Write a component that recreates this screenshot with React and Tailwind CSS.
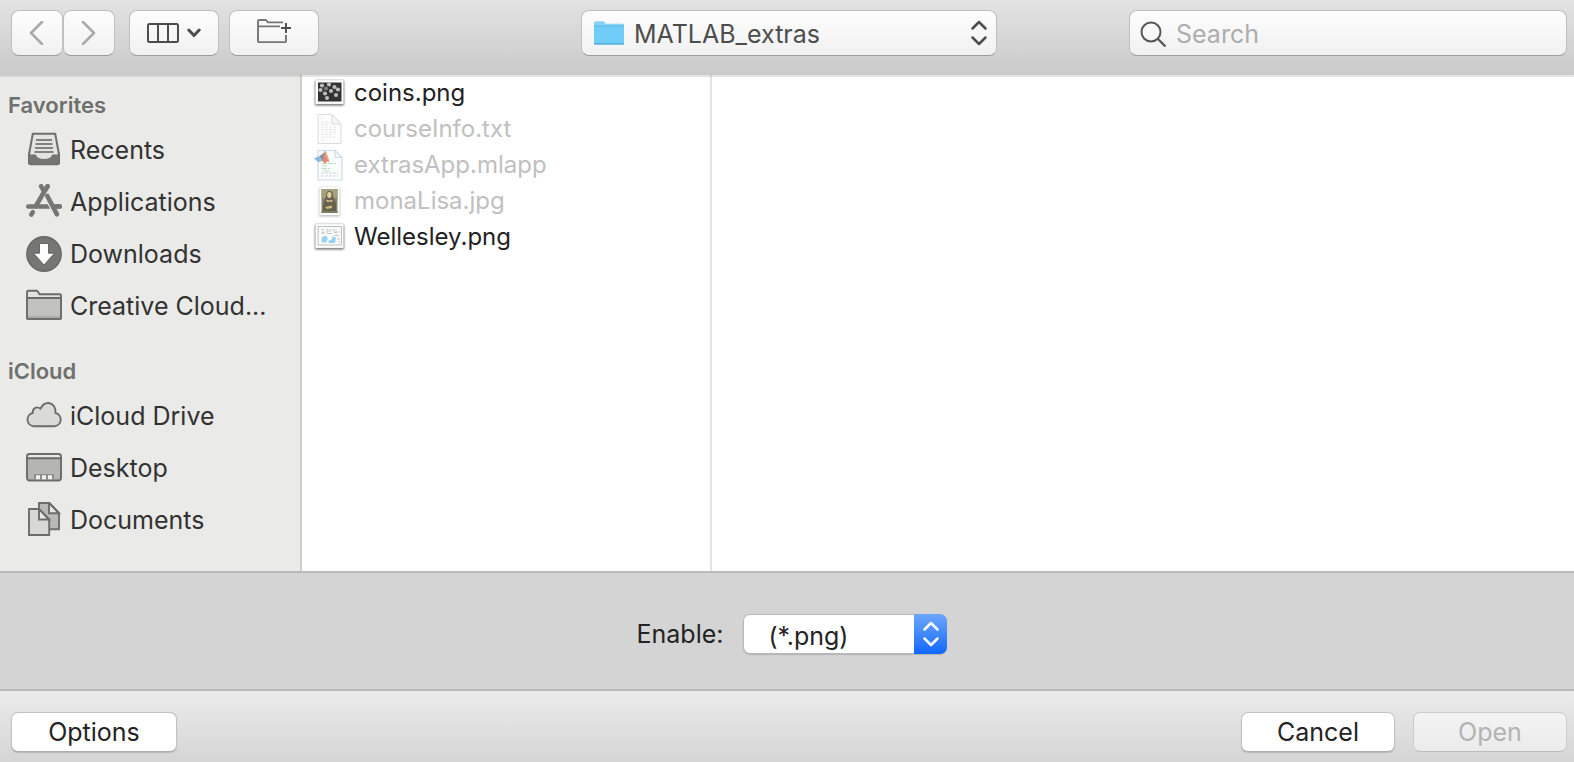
import React from "react";

const ICON = "h-9 w-9 shrink-0";

function RecentsIcon() {
  return (
    <svg className={ICON} viewBox="0 0 36 36" fill="none" aria-hidden="true">
      <path d="M6.8 1.8h22.4L33 22.5v8q0 1.7-1.7 1.7H4.7Q3 32.200 3 30.500v-8z" fill="#e4e4e2" stroke="#6f6f6d" strokeWidth="2" strokeLinejoin="round" />
      <path d="M3 23h6.500q1.500 4.500 8.500 4.500t8.500-4.500H33v7.500q0 1.700-1.700 1.700H4.700Q3 32.200 3 30.500z" fill="#767674" stroke="#6f6f6d" strokeWidth="1" />
      <path d="M10 8h16M9.500 12h17M9 16h18M8.500 20h19" stroke="#82827f" strokeWidth="1.900" />
    </svg>
  );
}

function ApplicationsIcon() {
  return (
    <svg className={ICON} viewBox="0 0 36 36" fill="none" stroke="#767674" strokeLinecap="round" aria-hidden="true">
      <path d="M2.300 22.500h31.400" strokeWidth="4.600" />
      <path d="M21.500 2.300 9.800 22" strokeWidth="4.600" />
      <path d="M6.800 28.200 5.300 30.500" strokeWidth="4.600" />
      <path d="M15.200 2.300l2.300 4" strokeWidth="4.600" />
      <path d="M18.800 8.500 31.500 31" stroke="#eaeae8" strokeWidth="6.600" strokeLinecap="butt" />
      <path d="M21.500 2.300 16.500 10.800" strokeWidth="4.600" />
      <path d="M21.300 12 31 30.300" strokeWidth="4.600" />
      <path d="M28 22.500h5.700" strokeWidth="4.600" />
    </svg>
  );
}

function DownloadsIcon() {
  return (
    <svg className={ICON} viewBox="0 0 36 36" aria-hidden="true">
      <circle cx="18" cy="18" r="17" fill="#767674" stroke="#6b6b69" strokeWidth="1.800" />
      <path d="M13.500 7.500h9v9.700h6L18 29 7.500 17.200h6z" fill="#fdfdfd" stroke="#666664" strokeWidth="1" />
    </svg>
  );
}

function FolderIcon() {
  return (
    <svg className={ICON} viewBox="0 0 36 36" strokeLinejoin="round" aria-hidden="true">
      <path d="M1 30V4q0-1.200 1.200-1.200h8.300q.8 0 1.300.7l1.400 2.300q.4.500 1 .5h19.600q1.200 0 1.200 1.200V30q0 .8-.8.8H1.800Q1 30.800 1 30z" fill="#e2e2e0" stroke="#6c6c6a" strokeWidth="1.900" />
      <path d="M1 11q0-1 1-1h32q1 0 1 1v19q0 .8-.8.8H1.800Q1 30.800 1 30z" fill="#c2c2c1" stroke="#6c6c6a" strokeWidth="1.900" />
      <path d="M2 28.700h32" stroke="#adadac" strokeWidth="2" />
    </svg>
  );
}

function CloudIcon() {
  return (
    <svg className={ICON} viewBox="0 0 36 36" aria-hidden="true">
      <path d="M7.500 28.200A6.700 6.700 0 0 1 6.700 15C6.300 10.500 10.500 7.600 14.500 10.700 16.500 6.500 19.500 4.800 22.500 5 27 5.300 30 9.500 29.500 15A6.700 6.700 0 0 1 28.700 28.200z" fill="#dadad9" stroke="#6c6c6a" strokeWidth="1.900" strokeLinejoin="round" />
    </svg>
  );
}

function DesktopIcon() {
  return (
    <svg className={ICON} viewBox="0 0 36 36" aria-hidden="true">
      <rect x="1" y="4" width="34" height="26.500" rx="2.500" fill="#b5b5b4" />
      <path d="M1 8.500V6.500Q1 4 3.500 4h29Q35 4 35 6.500v2z" fill="#e8e8e6" />
      <path d="M1 8.300h34" stroke="#6c6c6a" strokeWidth="1.900" />
      <rect x="1" y="4" width="34" height="26.500" rx="2.500" fill="none" stroke="#6c6c6a" strokeWidth="1.900" />
      <path d="M8 24h20v5.600H8z" fill="#8e8e8d" />
      <path d="M10 25.300h4v4h-4zM16 25.300h4v4h-4zM22 25.300h4v4h-4z" fill="#f2f2f1" />
    </svg>
  );
}

function DocumentsIcon() {
  return (
    <svg className={ICON} viewBox="0 0 36 36" stroke="#6c6c6a" strokeWidth="1.900" aria-hidden="true">
      <path d="M13 1h10.500L33 11v16.300H13z" fill="#b9b9b8" />
      <path d="M23 1v10.300h10z" fill="#e8e8e6" />
      <path d="M3 7h10l10.200 10.500V33H3z" fill="#d8d8d7" />
      <path d="M13 7v10.500h10z" fill="#e8e8e6" />
    </svg>
  );
}

const FILE_ICON = "h-[34px] w-[34px] shrink-0";

function Frame({ x, y, w, h, children }) {
  return (
    <svg className={FILE_ICON + " overflow-visible drop-shadow-[0_1px_1px_rgba(0,0,0,0.7)]"} viewBox="0 0 34 34" aria-hidden="true">
      <rect x={x} y={y} width={w} height={h} rx="0.500" fill="#fff" stroke="#d0d0d0" strokeWidth="0.500" />
      {children}
    </svg>
  );
}

function CoinsIcon() {
  const coins = [[8, 9], [15, 8], [20.500, 10.500], [6.500, 13.500], [12, 12], [17, 14.500], [24, 13], [11, 17], [22, 18.500], [13, 21.500]];
  return (
    <Frame x="1.500" y="4" w="28" h="24">
      <g transform="translate(0 0.500)">
        <rect x="4" y="6" width="23.500" height="19" fill="#333" />
        {coins.map(([cx, cy], i) => (
          <circle key={i} cx={cx} cy={cy} r="2.100" fill={i === 4 ? "#7d7d7d" : "#bdbdbd"} />
        ))}
      </g>
    </Frame>
  );
}

function TextFileIcon() {
  return (
    <svg className={FILE_ICON} viewBox="0 0 34 34" aria-hidden="true">
      <path d="M4 2.500h14L27 12v19.500H4z" fill="#fdfdfd" stroke="#dcdcdc" />
      <path d="M18 2.500V12h9z" fill="#f6f6f6" stroke="#dcdcdc" />
      <path d="M7 6h4M7 10h9M7 12.500h9M7 15h16M7 17.500h15M7 20h16M7 22.500h12M7 25h14M7 28h5" stroke="#e3e3e3" strokeWidth="0.900" strokeDasharray="3 1" />
    </svg>
  );
}

function AppFileIcon() {
  return (
    <svg className={FILE_ICON} viewBox="0 0 34 34" aria-hidden="true">
      <path d="M4 2.500h17L28 9.500v22.500H4z" fill="#fbfcfe" stroke="#ccd9e8" strokeWidth="1.200" />
      <path d="M21 2.500v7h7z" fill="#f1f5fa" stroke="#ccd9e8" />
      <path d="M8 15.500h14M8 18h5M8 20.500h8M10 23h5" stroke="#b9e3b9" strokeWidth="1.200" strokeDasharray="5 1" />
      <path d="M7 25h17M7 28h17" stroke="#d3d3d3" strokeWidth="1.200" strokeDasharray="3 1" />
      <path d="M0 10.500 5.500 8 8.500 13 4 14z" fill="#8db9df" />
      <path d="M5.500 8Q8.500 7 11 3L8.500 13z" fill="#7a8fa8" />
      <path d="M11 3c1.500 0 3 7 4.500 11-2-1-3-1-4.500 2Q10 14 8 13z" fill="#df8871" />
      <path d="M11 3c1.500 0 3 7 4.500 11L12 9z" fill="#eeb48a" />
    </svg>
  );
}

function PortraitIcon() {
  return (
    <svg className={FILE_ICON + " overflow-visible drop-shadow-[0_1px_1px_rgba(0,0,0,0.3)]"} viewBox="0 0 34 34" aria-hidden="true">
      <path d="M5.500 3h20v28h-20z" fill="#fff" stroke="#e6e6e6" strokeWidth="0.500" />
      <path d="M7.500 5h16v24h-16z" fill="#85846a" />
      <path d="M7.500 5h16v9h-16z" fill="#a3a27c" />
      <path d="M12 12q0-5 3.500-5t3.500 5l3 8v7H9v-6z" fill="#66624e" />
      <ellipse cx="15.300" cy="11" rx="2.200" ry="3" fill="#e3cf9a" />
      <path d="M12.500 15.500q3 1.800 6 0v2.300h-6z" fill="#dcc58e" />
      <path d="M11 23l7-1.500v2.500l-5 1z" fill="#d2b77e" />
      <path d="M7.500 27h16v2h-16z" fill="#7d7b62" />
    </svg>
  );
}

function MapIcon() {
  return (
    <Frame x="1.500" y="4" w="28" h="24">
      <rect x="4" y="6.500" width="23.500" height="18.500" fill="#fafafa" stroke="#bdbdbd" />
      <path d="M8 17l4-1.500 2 3-2 4H8zM14 21l4-1.500v-3l4 1-1 5.500h-6zM18 8.500l2.500 1.500-.5 2z" fill="#94d3f3" />
      <path d="M7 9.500h3M12 8.500l3 3M7 13h4M14 13.500h4M22 9.500v4M24 12h2M20 15.500h5M23 19h3M7 20h1M13 10v4M9 11v3M25 21v2M16 9v3M20 12.500h3" stroke="#c3c8ca" strokeWidth="1" fill="none" />
    </Frame>
  );
}

function SidebarSection({ title, items }) {
  return (
    <section>
      <h2 className="flex h-10 items-center pt-0.5 pl-2 text-[22px] leading-7 font-semibold text-[#6f6f6e]">{title}</h2>
      <ul>
        {items.map(([label, Icon]) => (
          <li key={label}>
            <button type="button" className="flex h-[52px] w-full items-center gap-2 pl-[26px] text-left text-[25px] leading-8 text-[#323232]">
              <Icon />
              <span className="truncate">{label}</span>
            </button>
          </li>
        ))}
      </ul>
    </section>
  );
}

const favorites = [
  ["Recents", RecentsIcon],
  ["Applications", ApplicationsIcon],
  ["Downloads", DownloadsIcon],
  ["Creative Cloud...", FolderIcon],
];

const icloud = [
  ["iCloud Drive", CloudIcon],
  ["Desktop", DesktopIcon],
  ["Documents", DocumentsIcon],
];

const files = [
  { name: "coins.png", Icon: CoinsIcon, enabled: true },
  { name: "courseInfo.txt", Icon: TextFileIcon, enabled: false },
  { name: "extrasApp.mlapp", Icon: AppFileIcon, enabled: false },
  { name: "monaLisa.jpg", Icon: PortraitIcon, enabled: false },
  { name: "Wellesley.png", Icon: MapIcon, enabled: true },
];

const TOOL =
  "flex h-[46px] items-center justify-center rounded-lg border border-[#c0c0c0] border-b-[#9d9d9d] bg-linear-to-b from-[#fdfdfd] to-[#f1f1f1]";
const PUSH =
  "h-10 rounded-[7px] border border-[#c2c2c2] border-b-[#adadad] bg-white text-[25px] leading-8 text-[#232323] shadow-[0_1px_1px_rgba(0,0,0,0.15)]";

export default function App() {
  return (
    <div className="flex min-h-screen flex-col bg-[#d4d4d4] font-['Inter','Liberation_Sans',sans-serif]">
      <header className="relative z-10 grid h-[75px] grid-cols-[1fr_auto_1fr] items-start bg-linear-to-b from-[#e3e3e3] to-[#cacaca] pt-[10px] pr-[7px] pl-[11px] shadow-[0_2px_0_rgba(0,0,0,0.1)]">
        <div className="flex">
          <button type="button" aria-label="Back" className={TOOL + " w-[52px]"}>
            <svg className="h-6 w-4" viewBox="0 0 16 24" fill="none" stroke="#a9a9a9" strokeWidth="2.500" strokeLinecap="round" strokeLinejoin="round" aria-hidden="true">
              <path d="M13 1 2 12l11 11" />
            </svg>
          </button>
          <button type="button" aria-label="Forward" className={TOOL + " w-[52px]"}>
            <svg className="h-6 w-4" viewBox="0 0 16 24" fill="none" stroke="#a9a9a9" strokeWidth="2.500" strokeLinecap="round" strokeLinejoin="round" aria-hidden="true">
              <path d="M2 1l11 11L2 23" />
            </svg>
          </button>
          <button type="button" aria-label="Column view" className={TOOL + " ml-[14px] w-[90px] gap-2"}>
            <svg className="h-5 w-8" viewBox="0 0 32 20" fill="none" stroke="#4d4d4d" strokeWidth="2" aria-hidden="true">
              <rect x="1" y="1" width="30" height="18" rx="1.500" />
              <path d="M11 1v18M21 1v18" />
            </svg>
            <svg className="h-[10px] w-[14px]" viewBox="0 0 14 10" fill="none" stroke="#4d4d4d" strokeWidth="3" strokeLinecap="round" strokeLinejoin="round" aria-hidden="true">
              <path d="M1.800 2 7 7.500 12.200 2" />
            </svg>
          </button>
          <button type="button" aria-label="New folder" className={TOOL + " ml-[10px] w-[90px]"}>
            <svg className="mb-1 h-[26px] w-[34px]" viewBox="0 0 34 26" fill="none" stroke="#757575" strokeWidth="1.900" aria-hidden="true">
              <path d="M29 17v6.200q0 .9-.9.900H2q-1 0-1-1V3Q1 2 2 2h6.500q.6 0 1 .5l1.200 1.500q.4.400 1 .4H26M1.500 8.400h21.500" />
              <path d="M29 5v10M24 10h10" stroke="#4d4d4d" strokeWidth="1.900" />
            </svg>
          </button>
        </div>

        <div className="relative">
          <select aria-label="Folder" className="block h-[46px] w-[416px] appearance-none rounded-lg border border-[#c0c0c0] border-b-[#9d9d9d] bg-linear-to-b from-[#fdfdfd] to-[#f1f1f1] pt-px pr-10 pl-[52px] text-[25px] leading-8 text-[#4d4d4d]">
            <option>MATLAB_extras</option>
          </select>
          <svg className="pointer-events-none absolute top-[10px] left-3 h-[26px] w-8" viewBox="0 0 32 26" aria-hidden="true">
            <path d="M1 23V3q0-1.800 1.500-1.800H10q1 0 1.600.8l1.200 1.700h17Q31 3.700 31 5v18z" fill="#86d2f5" />
            <path d="M1 6h30v17.500q0 1-1 1H2q-1 0-1-1z" fill="#6fcdf8" />
            <path d="M1 6h30" stroke="#5bb6e2" strokeWidth="1" />
            <path d="M1 23.800h30" stroke="#54add8" strokeWidth="1.500" />
          </svg>
          <svg className="pointer-events-none absolute top-[10px] right-[9px] h-[26px] w-[18px]" viewBox="0 0 18 26" fill="none" stroke="#4d4d4d" strokeWidth="2.500" strokeLinecap="round" strokeLinejoin="round" aria-hidden="true">
            <path d="M2.500 8.500 9 2l6.500 6.500M2.500 17.500 9 24l6.500-6.500" />
          </svg>
        </div>

        <div className="relative justify-self-end">
          <input type="search" aria-label="Search" placeholder="Search" className="block h-[46px] w-[438px] appearance-none rounded-lg border border-[#c0c0c0] border-b-[#9d9d9d] bg-linear-to-b from-[#fdfdfd] to-[#f1f1f1] pt-px pr-3 pl-[46px] text-[25px] leading-8 text-[#4d4d4d] placeholder:text-[#adadad]" />
          <svg className="pointer-events-none absolute top-[11px] left-[11px] h-[26px] w-[27px]" viewBox="0 0 27 26" fill="none" stroke="#555" strokeWidth="2" aria-hidden="true">
            <circle cx="11" cy="11" r="9.500" />
            <path d="M17.500 17.500 25.500 25.500" strokeWidth="2.300" />
          </svg>
        </div>
      </header>

      <main className="flex flex-1">
        <nav aria-label="Locations" className="flex w-[302px] shrink-0 flex-col gap-[18px] border-r-2 border-[#cecece] bg-[#eaeae8] pt-[9px] pb-6">
          <SidebarSection title="Favorites" items={favorites} />
          <SidebarSection title="iCloud" items={icloud} />
        </nav>
        <ul className="w-[410px] shrink-0 border-r-2 border-[#e3e3e3] bg-white">
          {files.map(({ name, Icon, enabled }) => (
            <li key={name}>
              <button type="button" disabled={!enabled} className="flex h-9 w-full items-center gap-[6px] pl-3 text-left text-[24px] leading-7 text-[#222] disabled:text-[#c0c0c0]">
                <Icon />
                <span>{name}</span>
              </button>
            </li>
          ))}
        </ul>
        <section aria-label="Preview" className="flex-1 bg-white" />
      </main>

      <div className="flex h-[120px] items-center justify-center gap-5 border-y-2 border-[#bababa] bg-[#d4d4d4] pt-[6px] pl-[10px]">
        <label htmlFor="file-type" className="text-[25px] leading-8 text-[#232323]">Enable:</label>
        <div className="relative">
          <select id="file-type" className="block h-10 w-[204px] appearance-none rounded-[7px] border border-[#b8b8b8] bg-white pt-1 pr-10 pl-6 text-[25px] leading-8 text-[#232323] shadow-[0_1px_1px_rgba(0,0,0,0.15)]">
            <option>(*.png)</option>
          </select>
          <span className="pointer-events-none absolute inset-y-0 right-0 flex w-[33px] items-center justify-center rounded-r-[7px] bg-linear-to-b from-[#6aa6fb] to-[#0a66fe]">
            <svg className="h-[26px] w-[18px]" viewBox="0 0 18 26" fill="none" stroke="#fff" strokeWidth="2.500" strokeLinecap="round" strokeLinejoin="round" aria-hidden="true">
              <path d="M2.500 8.500 9 2l6.500 6.500M2.500 17.500 9 24l6.500-6.500" />
            </svg>
          </span>
        </div>
      </div>

      <footer className="flex h-[71px] items-center gap-[18px] bg-linear-to-b from-[#ebebeb] to-[#d5d5d5] pt-[10px] pr-[7px] pl-[11px]">
        <button type="button" className={PUSH + " mr-auto w-[166px]"}>Options</button>
        <button type="button" className={PUSH + " w-[154px]"}>Cancel</button>
        <button type="button" disabled className="h-10 w-[154px] rounded-[7px] border border-[#cccccc] border-b-[#bdbdbd] bg-linear-to-b from-[#f3f3f3] to-[#ebebeb] text-[25px] leading-8 text-[#b3b3b3]">Open</button>
      </footer>
    </div>
  );
}
